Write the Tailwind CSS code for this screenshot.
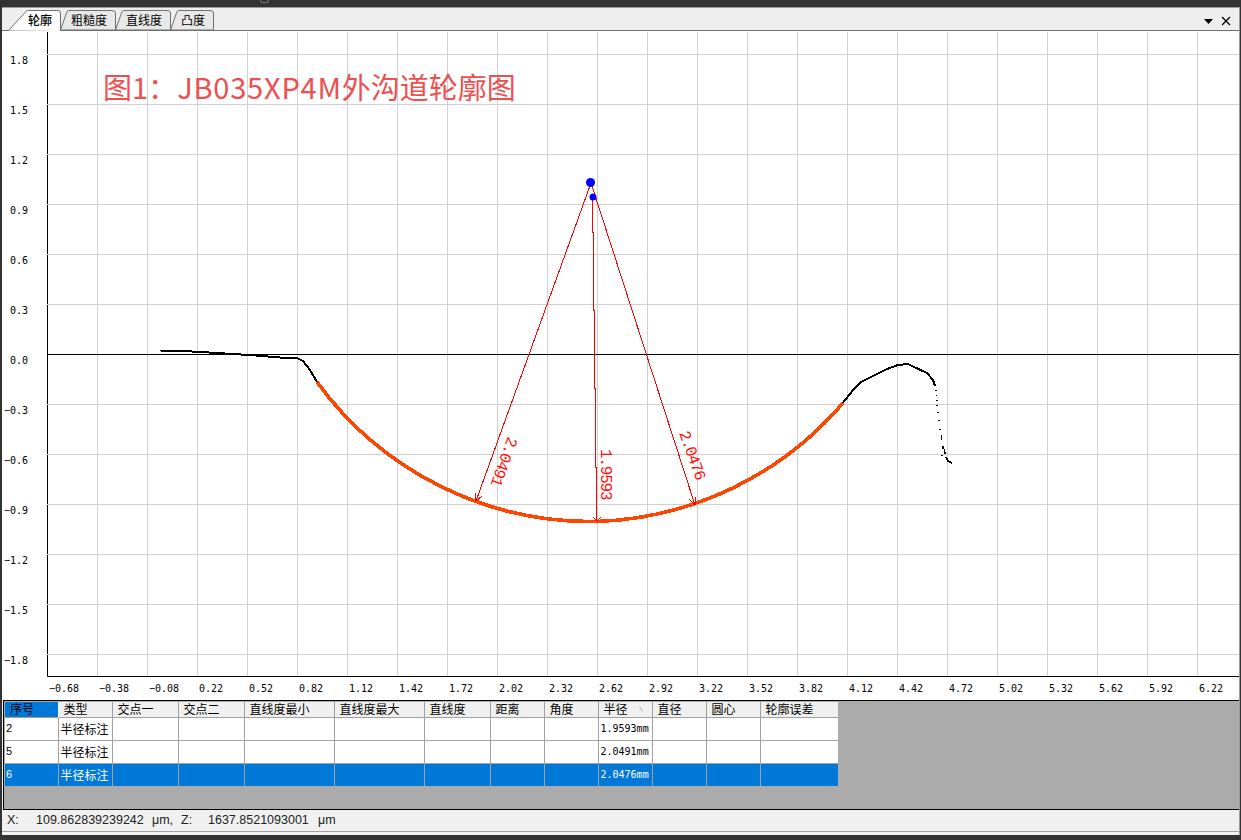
<!DOCTYPE html>
<html lang="zh-CN">
<head>
  <meta charset="UTF-8" />
  <title>轮廓</title>
  <script src="https://cdn.jsdelivr.net/npm/@tailwindcss/browser@4"></script>
</head>
<body class="relative w-[1241px] h-[840px] overflow-hidden bg-[#333333] pt-[7px] pl-[2px] pr-[1px] pb-[5px] font-['Liberation_Sans','Noto_Sans_CJK_SC',sans-serif] text-xs text-black">
  <div class="absolute left-[260px] top-[-4px] w-[9px] h-[7px] rounded-[2px] border border-[#777777]"></div>
  <div class="flex flex-col h-[828px] bg-[#f0f0f0] border-t border-r border-[#9a9a9a]">

    <!-- tabs -->
    <div class="relative flex items-end h-[23px] shrink-0 pl-[6px] bg-[#eeeeee] border-b border-[#707070]">
      <div class="relative z-10 -mb-px w-[53px] h-[21px]">
        <svg class="absolute inset-0" width="53" height="21"><path d="M0.5 20.5 L18 1.5 Q19 0.5 21 0.5 H50 Q52.5 0.5 52.5 3 V21" fill="#ffffff" stroke="#707070" /></svg>
        <span class="absolute left-[20px] top-[2px] text-black font-medium font-['Noto_Sans_CJK_SC',sans-serif]">轮廓</span>
      </div>
      <div class="relative -ml-px w-[56px] h-[20px]">
        <svg class="absolute inset-0" width="56" height="20"><path d="M0.5 20 L7 1.5 Q8 0.5 10 0.5 H52 Q55.5 0.5 55.5 3 V20 Z" fill="#e8e8e8" stroke="#707070" /></svg>
        <span class="absolute left-[11px] top-[2px] font-['Noto_Sans_CJK_SC',sans-serif]">粗糙度</span>
      </div>
      <div class="relative -ml-px w-[56px] h-[20px]">
        <svg class="absolute inset-0" width="56" height="20"><path d="M0.5 20 L7 1.5 Q8 0.5 10 0.5 H52 Q55.5 0.5 55.5 3 V20 Z" fill="#e8e8e8" stroke="#707070" /></svg>
        <span class="absolute left-[11px] top-[2px] font-['Noto_Sans_CJK_SC',sans-serif]">直线度</span>
      </div>
      <div class="relative -ml-px w-[44px] h-[20px]">
        <svg class="absolute inset-0" width="44" height="20"><path d="M0.5 20 L7 1.5 Q8 0.5 10 0.5 H40 Q43.5 0.5 43.5 3 V20 Z" fill="#e8e8e8" stroke="#707070" /></svg>
        <span class="absolute left-[11px] top-[2px] font-['Noto_Sans_CJK_SC',sans-serif]">凸度</span>
      </div>
      <div class="ml-auto mr-[8px] mb-[4px] flex items-center gap-[8px]">
        <svg width="9" height="5"><path d="M0 0H9L4.5 5Z" fill="#000000" /></svg>
        <svg width="10" height="10"><path d="M1 1L9 9M9 1L1 9" stroke="#000000" stroke-width="1.3" fill="none" /></svg>
      </div>
    </div>

    <!-- chart, coordinates in the viewBox are page pixels -->
    <div class="h-[669px] shrink-0 bg-white">
      <svg width="1238" height="669" viewBox="2 31 1238 669" class="block">
        <path d="M47.5 32V676.5H1239" fill="none" stroke="#000000" />
        <path d="M97.5 32V676M147.5 32V676M197.5 32V676M247.5 32V676M297.5 32V676M347.5 32V676M397.5 32V676M447.5 32V676M497.5 32V676M547.5 32V676M597.5 32V676M647.5 32V676M697.5 32V676M747.5 32V676M797.5 32V676M847.5 32V676M897.5 32V676M947.5 32V676M997.5 32V676M1047.5 32V676M1097.5 32V676M1147.5 32V676M1197.5 32V676M47 54.5H1239M47 104.5H1239M47 154.5H1239M47 204.5H1239M47 254.5H1239M47 304.5H1239M47 404.5H1239M47 454.5H1239M47 504.5H1239M47 554.5H1239M47 604.5H1239M47 654.5H1239" fill="none" stroke="#d0d0d0" />
        <path d="M47 354.5H1239" fill="none" stroke="#000000" />

        <g font-family="'DejaVu Sans Mono',monospace" font-size="10" fill="#000000" text-anchor="end">
          <text x="28" y="64">1.8</text><text x="28" y="114">1.5</text><text x="28" y="164">1.2</text><text x="28" y="214">0.9</text>
          <text x="28" y="264">0.6</text><text x="28" y="314">0.3</text><text x="28" y="364">0.0</text><text x="28" y="414">−0.3</text>
          <text x="28" y="464">−0.6</text><text x="28" y="514">−0.9</text><text x="28" y="564">−1.2</text><text x="28" y="614">−1.5</text><text x="28" y="664">−1.8</text>
        </g>
        <g font-family="'DejaVu Sans Mono',monospace" font-size="10" fill="#000000">
          <text x="49" y="692">−0.68</text><text x="99" y="692">−0.38</text><text x="149" y="692">−0.08</text><text x="199" y="692">0.22</text>
          <text x="249" y="692">0.52</text><text x="299" y="692">0.82</text><text x="349" y="692">1.12</text><text x="399" y="692">1.42</text>
          <text x="449" y="692">1.72</text><text x="499" y="692">2.02</text><text x="549" y="692">2.32</text><text x="599" y="692">2.62</text>
          <text x="649" y="692">2.92</text><text x="699" y="692">3.22</text><text x="749" y="692">3.52</text><text x="799" y="692">3.82</text>
          <text x="849" y="692">4.12</text><text x="899" y="692">4.42</text><text x="949" y="692">4.72</text><text x="999" y="692">5.02</text>
          <text x="1049" y="692">5.32</text><text x="1099" y="692">5.62</text><text x="1149" y="692">5.92</text><text x="1199" y="692">6.22</text>
        </g>

        <text x="103" y="99" font-family="'Noto Sans CJK SC',sans-serif" font-size="29" fill="#ec5050">图1<tspan font-family="'Noto Sans CJK TC',sans-serif">：</tspan><tspan letter-spacing="0.800">JB035XP4M</tspan>外沟道轮廓图</text>

        <!-- measured profile -->
        <g shape-rendering="crispEdges" fill="none" stroke="#000000">
          <path d="M160 350.5L183 351L217 353L232 354L250 355L280 357.5L298 358.5L303 361L310 370L317 382" stroke-width="2" />
          <path d="M842 404L853 390L861 382L873 376L887 369L898 365L908 364L912 366L927 373L933 380L935 386" stroke-width="2" />
          <path d="M936 390v1M936.500 395v1M937 400v1M937 405v1M938 412v1M939 420v1M940 429v1M941.500 435v5M943 446v3M944.500 449v3M945 452v2M942 455v1M946 457L948 461L952 463" stroke-width="1.500" />
        </g>
        <path d="M317 382A339 339 0 0 0 597 521.500A339 339 0 0 0 843 403" fill="none" stroke="#ff4500" stroke-width="3.600" shape-rendering="crispEdges" />

        <!-- radius marks -->
        <path d="M591 183L476 501M591 183L695 505M592.500 197V232H593.500V310H594.500V388H595.500V467H596.500V521" fill="none" stroke="#ff0000" shape-rendering="crispEdges" />
        <path d="M476 501L475.500 493M476 501L482 496M695 505L689 499M695 505L696 497M597 521L593 517M597 521L601 517" fill="none" stroke="#ff0000" shape-rendering="crispEdges" />
        <circle cx="590.500" cy="182.500" r="4.500" fill="#0000ff" />
        <circle cx="593" cy="197" r="3.500" fill="#0000ff" />
        <g font-family="'Liberation Mono',monospace" font-size="16" letter-spacing="-1.200" fill="#ff1010">
          <text transform="translate(508 436) rotate(110)">2.0491</text>
          <text transform="translate(601 449) rotate(90)">1.9593</text>
          <text transform="translate(679 433) rotate(70)">2.0476</text>
        </g>
      </svg>
    </div>

    <!-- measurement table -->
    <div class="h-[110px] shrink-0 ml-px bg-[#ababab] border-y border-l border-black pl-[1px] pt-[1px]">
      <table class="table-fixed border-collapse w-[833px] text-xs">
        <colgroup>
          <col class="w-[53px]" /><col class="w-[54px]" /><col class="w-[66px]" /><col class="w-[66px]" /><col class="w-[90px]" /><col class="w-[90px]" /><col class="w-[66px]" /><col class="w-[54px]" /><col class="w-[54px]" /><col class="w-[54px]" /><col class="w-[54px]" /><col class="w-[54px]" /><col class="w-[78px]" />
        </colgroup>
        <thead class="bg-[#f0f0f0] font-['Noto_Sans_CJK_SC',sans-serif] text-left font-normal">
          <tr class="h-[15px] leading-none border-b border-[#a0a0a0]">
            <th class="font-normal pl-[5px] bg-[#0078d7] border-r border-[#f0f0f0]">序号</th>
            <th class="font-normal pl-[5px] border-r border-[#a0a0a0]">类型</th>
            <th class="font-normal pl-[5px] border-r border-[#a0a0a0]">交点一</th>
            <th class="font-normal pl-[5px] border-r border-[#a0a0a0]">交点二</th>
            <th class="font-normal pl-[5px] border-r border-[#a0a0a0]">直线度最小</th>
            <th class="font-normal pl-[5px] border-r border-[#a0a0a0]">直线度最大</th>
            <th class="font-normal pl-[5px] border-r border-[#a0a0a0]">直线度</th>
            <th class="font-normal pl-[5px] border-r border-[#a0a0a0]">距离</th>
            <th class="font-normal pl-[5px] border-r border-[#a0a0a0]">角度</th>
            <th class="relative font-normal pl-[5px] border-r border-[#a0a0a0]">半径
              <svg class="absolute right-[9px] top-[4px]" width="4" height="6"><path d="M0.500 0.500L3.500 5.500" stroke="#b0b0b0" fill="none" /></svg>
            </th>
            <th class="font-normal pl-[5px] border-r border-[#a0a0a0]">直径</th>
            <th class="font-normal pl-[5px] border-r border-[#a0a0a0]">圆心</th>
            <th class="font-normal pl-[5px]">轮廓误差</th>
          </tr>
        </thead>
        <tbody>
          <tr class="h-[23px] bg-white border-b border-[#a0a0a0]">
            <td class="pl-[1px] border-r border-[#a0a0a0] text-[11px]">2</td>
            <td class="pl-[2px] border-r border-[#a0a0a0] font-['Noto_Sans_CJK_SC',sans-serif]">半径标注</td>
            <td class="border-r border-[#a0a0a0]"></td><td class="border-r border-[#a0a0a0]"></td><td class="border-r border-[#a0a0a0]"></td><td class="border-r border-[#a0a0a0]"></td><td class="border-r border-[#a0a0a0]"></td><td class="border-r border-[#a0a0a0]"></td><td class="border-r border-[#a0a0a0]"></td>
            <td class="pl-[2px] border-r border-[#a0a0a0] font-['DejaVu_Sans_Mono',monospace] text-[10px]">1.9593mm</td>
            <td class="border-r border-[#a0a0a0]"></td><td class="border-r border-[#a0a0a0]"></td><td></td>
          </tr>
          <tr class="h-[23px] bg-white border-b border-[#a0a0a0]">
            <td class="pl-[1px] border-r border-[#a0a0a0] text-[11px]">5</td>
            <td class="pl-[2px] border-r border-[#a0a0a0] font-['Noto_Sans_CJK_SC',sans-serif]">半径标注</td>
            <td class="border-r border-[#a0a0a0]"></td><td class="border-r border-[#a0a0a0]"></td><td class="border-r border-[#a0a0a0]"></td><td class="border-r border-[#a0a0a0]"></td><td class="border-r border-[#a0a0a0]"></td><td class="border-r border-[#a0a0a0]"></td><td class="border-r border-[#a0a0a0]"></td>
            <td class="pl-[2px] border-r border-[#a0a0a0] font-['DejaVu_Sans_Mono',monospace] text-[10px]">2.0491mm</td>
            <td class="border-r border-[#a0a0a0]"></td><td class="border-r border-[#a0a0a0]"></td><td></td>
          </tr>
          <tr class="h-[23px] bg-[#0078d7] text-white">
            <td class="pl-[1px] border-r border-[#a0a0a0] text-[11px]">6</td>
            <td class="pl-[2px] border-r border-[#a0a0a0] font-['Noto_Sans_CJK_SC',sans-serif]">半径标注</td>
            <td class="border-r border-[#a0a0a0]"></td><td class="border-r border-[#a0a0a0]"></td><td class="border-r border-[#a0a0a0]"></td><td class="border-r border-[#a0a0a0]"></td><td class="border-r border-[#a0a0a0]"></td><td class="border-r border-[#a0a0a0]"></td><td class="border-r border-[#a0a0a0]"></td>
            <td class="pl-[2px] border-r border-[#a0a0a0] font-['DejaVu_Sans_Mono',monospace] text-[10px]">2.0476mm</td>
            <td class="border-r border-[#a0a0a0]"></td><td class="border-r border-[#a0a0a0]"></td><td></td>
          </tr>
        </tbody>
      </table>
    </div>

    <!-- status bar -->
    <div class="flex items-center h-[22px] shrink-0 pl-[5px] bg-[#f0f0f0] border-b border-[#a0a0a0] text-[12.5px] text-[#222222]">
      <span class="w-[29px]">X:</span>
      <span class="w-[116px]">109.862839239242</span>
      <span class="w-[29px]">μm,</span>
      <span class="w-[27px]">Z:</span>
      <span class="w-[110px]">1637.8521093001</span>
      <span>μm</span>
    </div>
  </div>
</body>
</html>
